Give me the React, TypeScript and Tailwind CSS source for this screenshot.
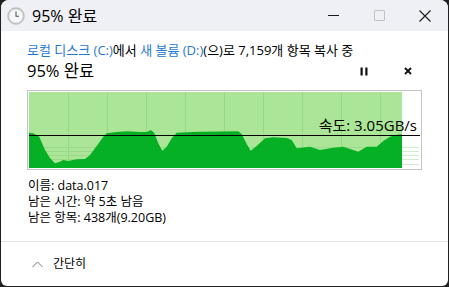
import React from 'react'

const FONT = { fontFamily: '"Open Sans", "Noto Sans CJK KR", sans-serif' }

// chart points, x relative to plot left, y relative to plot top (76px tall)
const curve: [number, number][] = [
  [0, 40.7], [4.3, 41.3], [10.3, 44.7], [16, 58], [21, 66], [26, 71.3], [30.3, 70],
  [34.3, 68], [39.3, 69], [47.7, 67.3], [56, 67], [61, 63], [67.7, 54], [74.3, 44.7],
  [77.7, 41.3], [87.7, 40], [97.7, 39.3], [111, 40], [117.7, 40], [121.7, 38],
  [125, 40.5], [129.3, 51.3], [133.3, 58.7], [137.7, 54.7], [142.7, 46.3], [147.7, 40.7],
  [157.7, 40.3], [171, 39.8], [191, 39.5], [209.3, 39.3], [212.7, 42], [217.7, 52],
  [221.7, 58.7], [227.7, 54], [236, 46.3], [244.3, 45.3], [257.7, 46], [262.7, 48],
  [267.7, 56.3], [274.3, 55.5], [281, 54.7], [291, 58], [304.3, 55.7], [314.3, 54.7],
  [329.3, 59.7], [337.7, 54.7], [347.7, 54.7], [354.3, 49], [361, 44.7], [366, 43],
  [373, 42.3],
]

function SpeedChart() {
  const points =
    '0,76 ' + curve.map(([x, y]) => `${x},${y}`).join(' ') + ' 373,76'
  const vlines = [39, 78, 117, 156, 195, 234, 273, 312, 351]
  const hlines = [55, 59, 63, 67, 72]
  return (
    <div className="relative h-[80px] w-[395px] border border-[#c4c4c4] bg-white p-px">
      <svg width="391" height="76" className="block">
        <rect x="0" y="0" width="373" height="76" fill="#abe597" />
        {vlines.map((x) => (
          <line key={x} x1={x + 0.5} y1="0" x2={x + 0.5} y2="76" stroke="#93da7f" />
        ))}
        {hlines.map((y) => (
          <g key={y}>
            <line x1="0" y1={y + 0.5} x2="373" y2={y + 0.5} stroke="#9ad987" />
            <line x1="373" y1={y + 0.5} x2="390" y2={y + 0.5} stroke="#cdeccd" />
          </g>
        ))}
        <polygon points={points} fill="#06b025" />
        <line x1="0" y1="43.5" x2="391" y2="43.5" stroke="#000" strokeWidth="1.2" />
      </svg>
      <span
        className="absolute right-[4px] top-[24px] text-[15px] leading-[20px] text-black"
        style={FONT}
      >
        속도: 3.05GB/s
      </span>
    </div>
  )
}

function ClockIcon() {
  return (
    <svg width="18" height="18" viewBox="0 0 18 18">
      <circle cx="9" cy="9" r="8.2" fill="#d4d4d4" stroke="#a8a8a8" strokeWidth="0.8" />
      <circle cx="9" cy="9" r="6.6" fill="#f6f6f6" />
      <path d="M9 4.5V9.3H12" fill="none" stroke="#555" strokeWidth="1.1" />
    </svg>
  )
}

export default function App() {
  return (
    <div className="h-[287px] w-[449px] bg-[#202020]" style={FONT}>
      <div className="mx-px flex h-[286px] flex-col overflow-hidden rounded-t-[8px] rounded-b-[6px] bg-white">
        {/* title bar */}
        <div className="flex h-[31px] shrink-0 items-center bg-[#eff0f5]">
          <div className="ml-[6px] flex items-center">
            <ClockIcon />
          </div>
          <span className="ml-[7px] text-[16px] leading-[20px] text-black">95% 완료</span>
          <div className="ml-auto flex h-full items-center">
            <div className="flex h-full w-[46px] items-center justify-center">
              <div className="h-px w-[11px] bg-[#1a1a1a]" />
            </div>
            <div className="flex h-full w-[46px] items-center justify-center">
              <div className="h-[11px] w-[11px] rounded-[1px] border border-[#c2c2c2]" />
            </div>
            <div className="flex h-full w-[46px] items-center justify-center">
              <svg width="12" height="12" viewBox="0 0 12 12">
                <path d="M0.5 0.5L11.5 11.5M11.5 0.5L0.5 11.5" stroke="#1a1a1a" strokeWidth="1.1" />
              </svg>
            </div>
          </div>
        </div>

        {/* content */}
        <div className="flex h-[210px] shrink-0 flex-col px-[26px] pt-[11px]">
          <div className="text-[13px] leading-[16px] text-black">
            <span className="text-[#1f78d1]">로컬 디스크 (C:)</span>에서{' '}
            <span className="text-[#1f78d1]">새 볼륨 (D:)</span>(으)로 7,159개 항목 복사 중
          </div>
          <div className="mt-[3px] flex h-[20px] items-center">
            <span className="text-[16.5px] leading-[20px] text-black">95% 완료</span>
            <div className="ml-auto mr-[10px] flex items-center gap-[36px]">
              <svg width="8" height="9" viewBox="0 0 8 9">
                <rect x="0.5" y="0.5" width="2.2" height="8" fill="#111" />
                <rect x="5.3" y="0.5" width="2.2" height="8" fill="#111" />
              </svg>
              <svg width="8" height="8" viewBox="0 0 8 8">
                <path d="M1 1L7 7M7 1L1 7" stroke="#111" strokeWidth="1.8" />
              </svg>
            </div>
          </div>
          <div className="mt-[9px]">
            <SpeedChart />
          </div>
          <div className="mt-[8px] flex flex-col pl-[1px] text-[12.5px] leading-[16px] text-black">
            <span>이름: data.017</span>
            <span>남은 시간: 약 5초 남음</span>
            <span>남은 항목: 438개(9.20GB)</span>
          </div>
        </div>

        {/* footer */}
        <div className="flex flex-1 items-center border-t border-[#e3e3e3] pl-[31px]">
          <svg width="11" height="7" viewBox="0 0 11 7">
            <path d="M0.5 6L5.5 1L10.5 6" fill="none" stroke="#777" strokeWidth="1" />
          </svg>
          <span className="ml-[10px] text-[12px] leading-[16px] text-black">간단히</span>
        </div>
      </div>
    </div>
  )
}
